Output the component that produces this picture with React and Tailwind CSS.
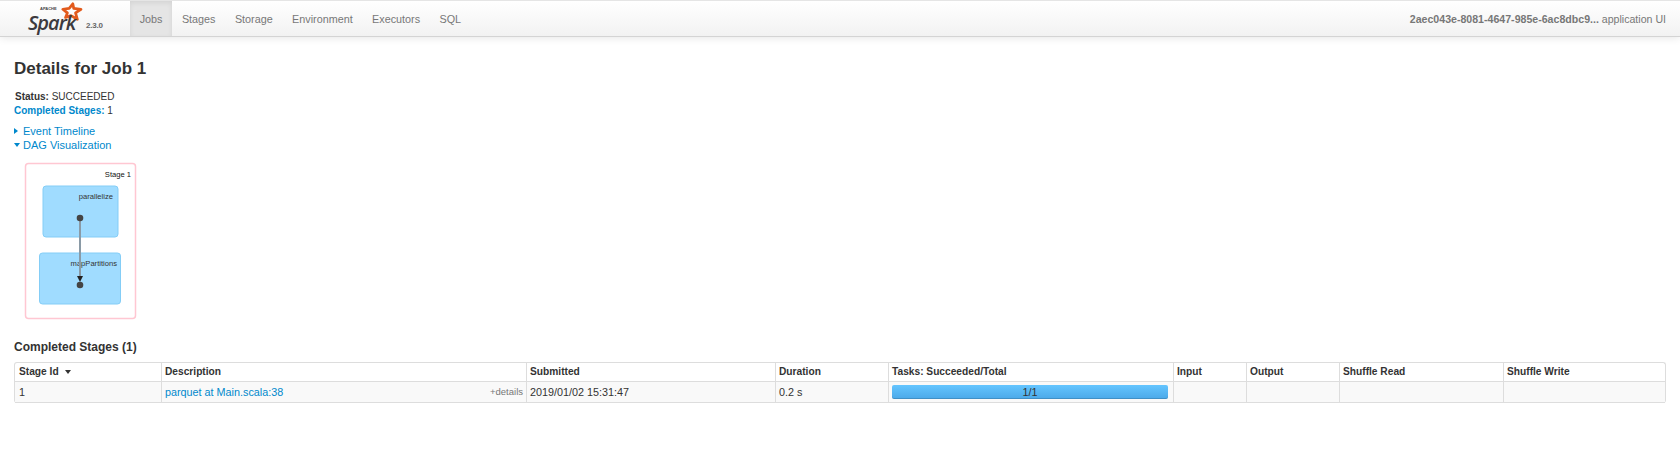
const navItems = ["Jobs", "Stages", "Storage", "Environment", "Executors", "SQL"];

const columns = [
  { label: "Stage Id", width: "w-[146px]" },
  { label: "Description", width: "w-[365px]" },
  { label: "Submitted", width: "w-[249px]" },
  { label: "Duration", width: "w-[113px]" },
  { label: "Tasks: Succeeded/Total", width: "w-[285px]" },
  { label: "Input", width: "w-[73px]" },
  { label: "Output", width: "w-[93px]" },
  { label: "Shuffle Read", width: "w-[164px]" },
  { label: "Shuffle Write", width: "w-[162px]" },
];

const SparkLogo = () => (
  <div className="relative w-[130px] shrink-0 h-full">
    <svg className="absolute left-[59px] top-[1px]" width="24" height="20" viewBox="0 0 26 22">
      <path
        d="M15 2 L16 7 L24 8 L18 12 L20 19 L13 15 L7 17 L9 12 L4 8 L11 7 Z"
        fill="none"
        stroke="#e25a1c"
        strokeWidth="3"
        strokeLinejoin="round"
      />
    </svg>
    <span className="absolute left-[40px] top-[6px] text-[4px] font-bold leading-none text-[#444]">APACHE</span>
    <span className="absolute left-[28px] top-[12px] text-[20px] leading-[20px] italic font-semibold tracking-[-1px] text-[#3c3a3e] font-['Open_Sans',sans-serif]">
      Spark
    </span>
    <span className="absolute left-[86px] top-[20px] text-[8px] leading-[10px] font-bold tracking-[-0.2px] text-[#666]">2.3.0</span>
  </div>
);

const DagViz = () => (
  <svg width="160" height="172" viewBox="0 0 160 172" className="block">
    <rect x="25.5" y="13.5" width="110" height="155" rx="3" fill="#fff" stroke="#ffc7d2" strokeWidth="1.5" />
    <text x="131" y="27" textAnchor="end" fontSize="7.6" fill="#111">Stage 1</text>
    <rect x="43" y="36" width="75" height="51" rx="3" fill="#a0dcff" stroke="#84cdf6" />
    <text x="113" y="49" textAnchor="end" fontSize="7.6" fill="#333">parallelize</text>
    <rect x="39.5" y="103" width="81" height="51" rx="3" fill="#a0dcff" stroke="#84cdf6" />
    <text x="117" y="116" textAnchor="end" fontSize="7.6" fill="#333">mapPartitions</text>
    <line x1="80" y1="68" x2="80" y2="127" stroke="#8a9aa6" strokeWidth="2" />
    <path d="M77 126 L83 126 L80 132 Z" fill="#222" />
    <circle cx="80" cy="68" r="3.3" fill="#444" />
    <circle cx="80" cy="135" r="3.3" fill="#444" />
  </svg>
);

export default function App() {
  return (
    <div className="min-h-[465px] bg-white text-[#333] text-[10.8px] leading-[14px] font-['Liberation_Sans',Arial,sans-serif]">
      {/* navbar */}
      <nav className="flex items-stretch h-[37px] border-t border-b border-t-[#e5e5e5] border-b-[#d4d4d4] bg-gradient-to-b from-white to-[#f2f2f2] shadow-[0_1px_8px_rgba(0,0,0,0.1)]">
        <SparkLogo />
        <ul className="flex">
          {navItems.map((item, i) => (
            <li
              key={item}
              className={`flex items-center px-[9.7px] text-[#777] ${i === 0 ? "bg-[#e5e5e5] shadow-[inset_0_2px_5px_rgba(0,0,0,0.08)]" : ""}`}
            >
              {item}
            </li>
          ))}
        </ul>
        <p className="ml-auto self-center pr-[14px] text-[10.6px] text-[#777]">
          <strong>2aec043e-8081-4647-985e-6ac8dbc9...</strong> application UI
        </p>
      </nav>

      <main className="px-[14px]">
        <h3 className="mt-[20px] text-[17px] leading-[24px] font-bold text-[#333]">Details for Job 1</h3>

        <ul className="mt-[9px] leading-[14px] text-[10px]">
          <li className="pl-[1px]"><strong>Status:</strong> SUCCEEDED</li>
          <li><strong className="text-[#0088cc]">Completed Stages:</strong> 1</li>
        </ul>

        <div className="mt-[6px] text-[11px] text-[#0088cc]">
          <div className="flex items-center">
            <span className="w-[9px] h-[14px] flex items-center">
              <span className="border-y-[3px] border-l-[4px] border-y-transparent border-l-[#0088cc]" />
            </span>
            Event Timeline
          </div>
          <div className="flex items-center">
            <span className="w-[9px] h-[14px] flex items-center">
              <span className="border-x-[3px] border-t-[4px] border-x-transparent border-t-[#0088cc]" />
            </span>
            DAG Visualization
          </div>
        </div>

        <div className="-ml-[14px] -mt-[2px]">
          <DagViz />
        </div>

        <h4 className="mt-[17px] text-[12px] leading-[16px] font-bold text-[#333]">Completed Stages (1)</h4>

        <table className="mt-[7px] w-[1652px] table-fixed border-separate border-spacing-0 border border-b-0 border-[#ddd] rounded-[3px]">
          <thead>
            <tr className="h-[19px]">
              {columns.map((col, i) => (
                <th
                  key={col.label}
                  className={`${col.width} ${i > 0 ? "border-l px-[3px]" : "px-[4px]"} text-left text-[10.2px] font-bold border-b border-[#ddd]`}
                >
                  {col.label}
                  {i === 0 && <span className="inline-block ml-[6px] mb-[1px] border-x-[3px] border-t-[4px] border-x-transparent border-t-[#333]" />}
                </th>
              ))}
            </tr>
          </thead>
          <tbody>
            <tr className="h-[21px] bg-[#f9f9f9]">
              <td className="px-[4px] border-b border-[#ddd]">1</td>
              <td className="px-[3px] border-b border-l border-[#ddd]">
                <div className="flex items-center justify-between">
                  <span className="text-[#0088cc]">parquet at Main.scala:38</span>
                  <span className="text-[9.5px] text-[#777] -mt-[1px]">+details</span>
                </div>
              </td>
              <td className="px-[3px] border-b border-l border-[#ddd]">2019/01/02 15:31:47</td>
              <td className="px-[3px] border-b border-l border-[#ddd]">0.2 s</td>
              <td className="pl-[3px] pr-[5px] border-b border-l border-[#ddd]">
                <div className="h-[14px] rounded-[2px] bg-gradient-to-b from-[#64c5ff] to-[#4aa8e8] shadow-[inset_0_-1px_0_rgba(0,0,0,0.15)] text-center text-[#333] leading-[14px]">
                  1/1
                </div>
              </td>
              <td className="border-b border-l border-[#ddd]" />
              <td className="border-b border-l border-[#ddd]" />
              <td className="border-b border-l border-[#ddd]" />
              <td className="border-b border-l border-[#ddd]" />
            </tr>
          </tbody>
        </table>
      </main>
    </div>
  );
}
